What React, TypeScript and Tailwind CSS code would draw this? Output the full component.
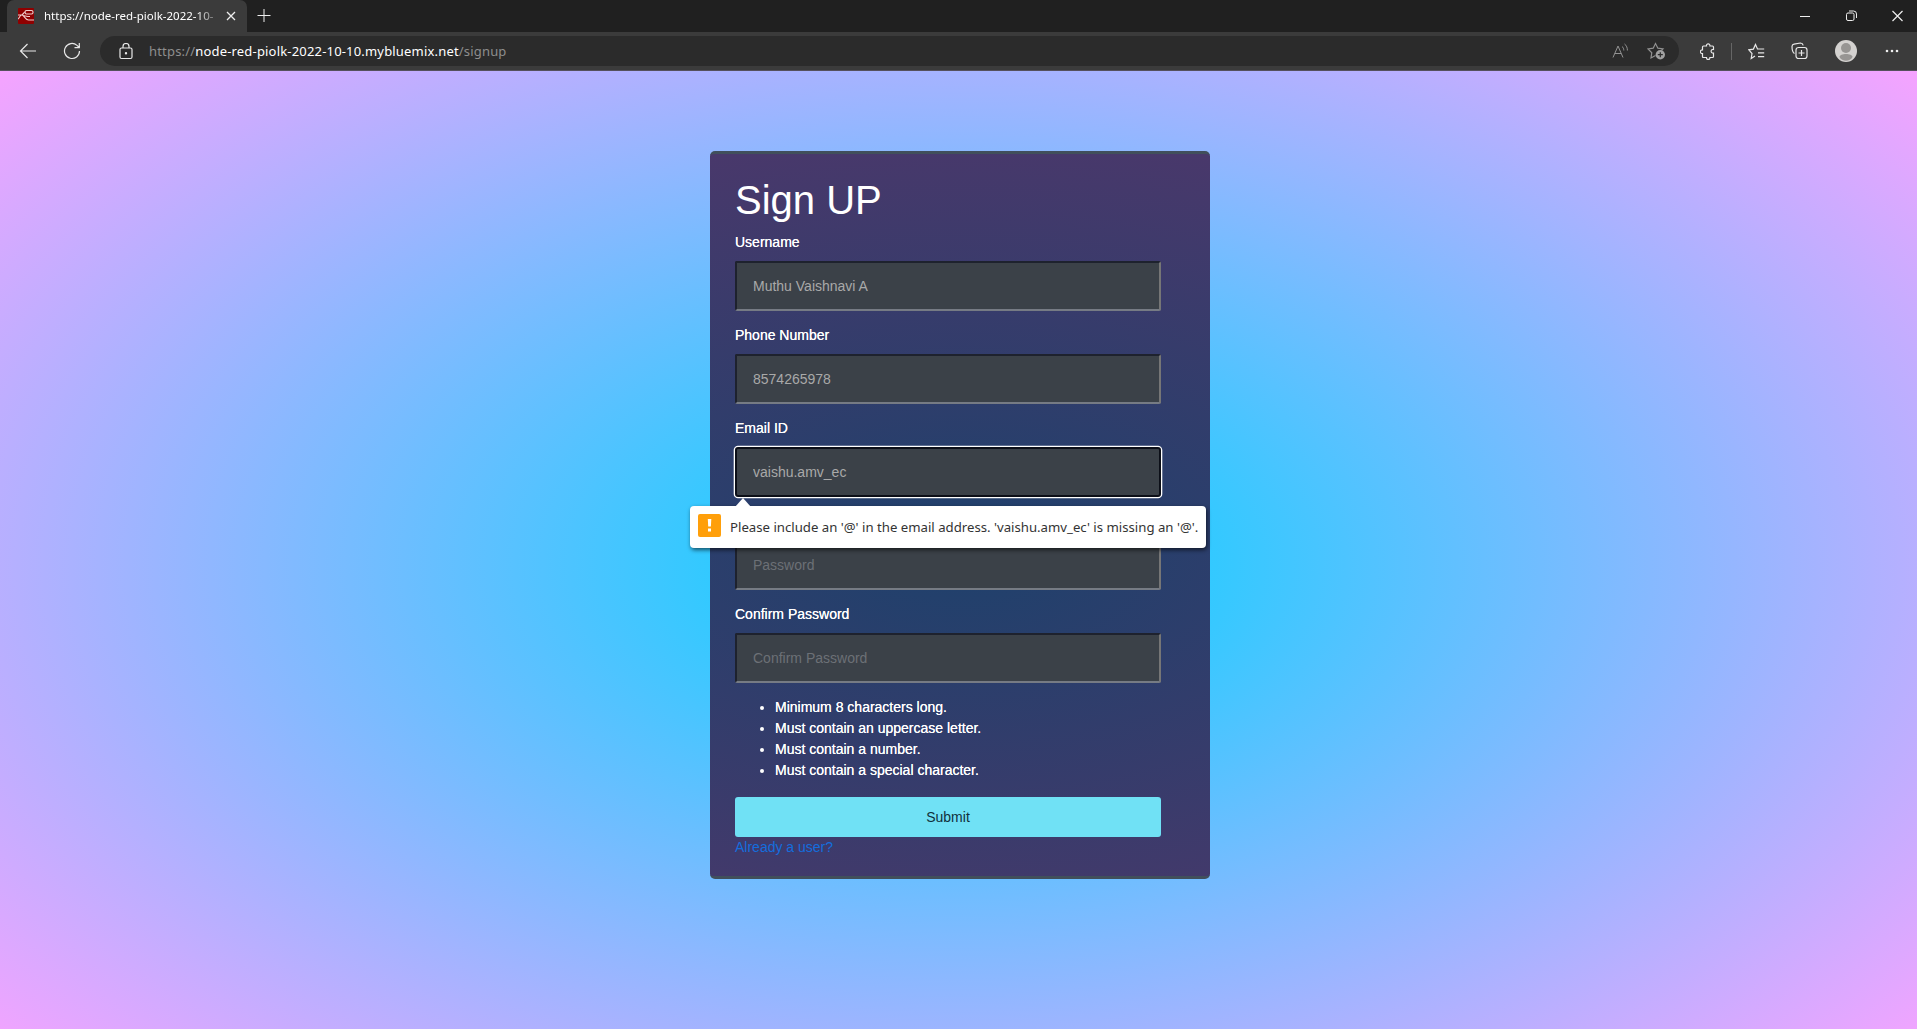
import React from "react";

const SEG = "font-['Noto_Sans','Open_Sans',sans-serif]";

function Field({ label, value, placeholder, focused }: { label: string; value?: string; placeholder?: string; focused?: boolean }) {
  return (
    <div className="h-[93px]">
      <label className="block h-[29px] leading-[21px] text-white [text-shadow:0_0_0.6px_#fff]">{label}</label>
      <input
        readOnly
        defaultValue={value}
        placeholder={placeholder}
        className={
          focused
            ? "block h-[50px] w-[426px] rounded-[3px] border-2 border-[#0c0f18] bg-[#3b4148] px-4 text-[#a9a9a9] shadow-[0_0_0_1.300px_#fff] outline-none"
            : "block h-[50px] w-[426px] rounded-[2px] border-2 border-t-[#1e222e] border-l-[#1e222e] border-r-[#767676] border-b-[#767b84] bg-[#3b4148] px-4 text-[#a9a9a9] outline-none placeholder:text-[#6c7076]"
        }
      />
    </div>
  );
}

export default function App() {
  return (
    <div className="flex h-[1029px] w-[1917px] flex-col overflow-hidden">
      <header className={`${SEG} shrink-0 bg-[#3b3b3b] text-white`}>
        <div className="flex h-8 items-start bg-[#202020]">
          <div className="ml-[7px] flex h-8 w-[240px] items-center rounded-t-[7px] bg-[#3b3b3b] pl-[11px]">
            <svg className="shrink-0" width="16" height="16" viewBox="0 0 16 16" fill="none" stroke="#f0cfcf" strokeWidth="1.100">
              <rect width="16" height="16" rx="1" fill="#8f0000" stroke="none" />
              <path d="M0 7h3.500c2 0 1.500-3 4-3M3.500 7c3 0 3.500 5 7 5H16M0 11c1 0 2-4 3.500-4M5 7.500c3 .5 4 1 7 1" />
              <rect x="7" y="2.500" width="8" height="3.500" rx="1.500" />
            </svg>
            <div className="ml-[10px] w-[172px] shrink-0 text-[11.5px] whitespace-nowrap [mask-image:linear-gradient(to_right,#000_88%,#0004)]">
              https://node-red-piolk-2022-10-
            </div>
            <svg className="ml-[10px] shrink-0" width="10" height="10" viewBox="0 0 10 10" stroke="#eee" strokeWidth="1.300"><path d="M1 1l8 8M9 1l-8 8" /></svg>
          </div>
          <svg className="mt-[9px] ml-[10px]" width="14" height="14" viewBox="0 0 14 14" stroke="#eee"><path d="M.5 6.500h13M7 0v13" /></svg>
          <div className="mt-[10px] mr-[14px] ml-auto flex h-3 items-center gap-[35px]">
            <svg width="11" height="12" viewBox="0 0 11 12" stroke="#eee"><path d="M0 6.500h10" /></svg>
            <svg width="11" height="12" viewBox="0 0 11 12" fill="none" stroke="#eee"><rect x=".5" y="3" width="7.500" height="7.500" rx="1.500" /><path d="M3 1h4.500a3 3 0 0 1 3 3v4" /></svg>
            <svg width="11" height="12" viewBox="0 0 11 12" stroke="#eee" strokeWidth="1.200"><path d="M.5 1l10 10M10.500 1l-10 10" /></svg>
          </div>
        </div>
        <div className="flex h-[39px] items-center border-b border-[#55505c]">
          <svg className="ml-[19px]" width="18" height="16" viewBox="0 0 18 16" fill="none" stroke="#e8e8e8" strokeWidth="1.200"><path d="M17 8H1.500M8.500 1l-7 7 7 7" /></svg>
          <svg className="ml-[26px]" width="18" height="18" viewBox="0 0 18 18" fill="none" stroke="#e8e8e8" strokeWidth="1.200"><path d="M16.500 9A7.500 7.500 0 1 1 14 3.400L16.300 5.500M16.300 1v4.700h-4.800" /></svg>
          <div className="ml-[19px] flex h-[30px] w-[1579px] items-center rounded-full bg-[#2b2b2b]">
            <svg className="ml-[19px]" width="14" height="17" viewBox="0 0 14 17" fill="none" stroke="#e8e8e8" strokeWidth="1.200"><rect x="1" y="5" width="12" height="10.500" rx="1.500" /><path d="M4 5V3.500a3 3 0 0 1 6 0V5" /><circle cx="7" cy="10.300" r=".6" fill="#fff" /></svg>
            <div className="mt-px ml-4 text-[13px] tracking-[0.18px] whitespace-nowrap text-[#8e8e8e]">https://<span className="text-white">node-red-piolk-2022-10-10.mybluemix.net</span>/signup</div>
            <svg className="ml-auto" width="17" height="16" viewBox="0 0 17 16" fill="none" stroke="#929292"><path d="M1 14.500L6 3l5 11.500M2.800 10.500h6.400M10 3.500c1.300 1 1.800 2.200 1.800 4M12.500 1c2.200 1.500 2.900 4 2.900 6.500" /></svg>
            <svg className="mr-[13px] ml-[18px]" width="19" height="18" viewBox="0 0 19 18" fill="none" stroke="#929292" strokeWidth="1.200"><path d="M8.500 13.500L4 16l.8-5.300L1 7l5.200-.8L8.500 1.500l2.400 4.700L16 7l-1.500 1.400" /><circle cx="13.300" cy="12.700" r="4.700" fill="#a0a0a0" stroke="none" /><path d="M13.300 10.200v5M10.800 12.700h5" stroke="#2b2b2b" /></svg>
          </div>
          <svg className="ml-[21px]" width="16" height="17" viewBox="0 0 16 17" fill="none" stroke="#e8e8e8" strokeWidth="1.200"><path d="M3.500 3h3c-.4-2.800 3.800-2.800 3.400 0H12.500q1 0 1 1v2.500c-3.200-.5-3.200 4 0 3.700V13.500q0 1-1 1H9.900c.4 2.600-3.800 2.600-3.400 0h-3q-1 0-1-1v-2.800c-2.800.2-2.800-4 0-3.800V4q0-1 1-1z" /></svg>
          <div className="ml-[15px] h-[17px] w-px bg-[#666]" />
          <svg className="ml-[16px]" width="17" height="17" viewBox="0 0 17 17" fill="none" stroke="#e8e8e8" strokeWidth="1.200"><path d="M7 13l-3.800 2.500.8-5L.8 6.800l4.600-.7L7.500 1.500l2 4.500h6.700M10 9.800h6.200M10 13.600h6.200" /></svg>
          <svg className="ml-[26px]" width="17" height="18" viewBox="0 0 17 18" fill="none" stroke="#e8e8e8" strokeWidth="1.200"><rect x="5" y="5.500" width="11" height="11" rx="2.500" /><path d="M10.500 8v6M7.500 11h6M3.500 11.500C1.500 10.500 1 7 1 4.500c0-1.500.8-2.200 2-2.400L9.500 1c1.500 0 2.300.7 2.700 2.300" /></svg>
          <svg className="ml-[27px]" width="22" height="22" viewBox="0 0 22 22"><circle cx="11" cy="11" r="11" fill="#d4d2d0" /><circle cx="11" cy="8" r="5" fill="#979593" /><path d="M4.500 17c0-4 13-4 13 0-2.500 5-10.500 5-13 0z" fill="#979593" /></svg>
          <svg className="ml-[28px]" width="14" height="4" viewBox="0 0 14 4" fill="#eee"><circle cx="2" cy="2" r="1.300" /><circle cx="7" cy="2" r="1.300" /><circle cx="12" cy="2" r="1.300" /></svg>
        </div>
      </header>
      <main className="flex flex-1 items-start bg-[radial-gradient(1330px_760px_at_50%_51.500%,#04d2ff_0%,#fda2ff_100%)] pt-[80px] font-['Liberation_Sans',Arial,sans-serif] text-[14px]">
        <section className="relative ml-[710px] h-[728px] w-[500px] rounded-[5px] border-y-[3px] border-[#414f5c] bg-[radial-gradient(800px_420px_at_50%_55%,#1e416c_0%,#49386b_100%)] px-[25px]">
          <h1 className="pt-[22px] text-[40px] leading-[48px] text-white">Sign UP</h1>
          <form className="pt-[8px]">
            <Field label="Username" value="Muthu Vaishnavi A" />
            <Field label="Phone Number" value="8574265978" />
            <Field label="Email ID" value="vaishu.amv_ec" focused />
            <div className="h-[93px] pt-[29px]">
              <input
                readOnly
                placeholder="Password"
                className="block h-[50px] w-[426px] rounded-[2px] border-2 border-t-[#1e222e] border-l-[#1e222e] border-r-[#767676] border-b-[#767b84] bg-[#3b4148] px-4 text-[#a9a9a9] outline-none placeholder:text-[#6c7076]"
              />
            </div>
            <Field label="Confirm Password" placeholder="Confirm Password" />
            <ul className="list-disc pl-10 leading-[21px] text-white [text-shadow:0_0_0.6px_#fff]">
              <li>Minimum 8 characters long.</li>
              <li>Must contain an uppercase letter.</li>
              <li>Must contain a number.</li>
              <li>Must contain a special character.</li>
            </ul>
            <button type="button" className="mt-4 block h-10 w-[426px] rounded-[3px] bg-[#70e1f5] text-[#11303c]">Submit</button>
            <a className="block leading-[21px] text-[#146ddd]">Already a user?</a>
          </form>
          <div className={`${SEG} absolute top-[352px] left-[-20px] flex h-[42px] w-[516px] items-center rounded-[4px] bg-white pl-2 text-[13.2px] text-[#333] shadow-[1px_2px_4px_rgba(0,0,0,0.6)]`}>
            <svg className="absolute -top-2 left-[45px]" width="16" height="9" viewBox="0 0 16 9"><path d="M0 9L8 0l8 9z" fill="#fff" /></svg>
            <svg className="mb-[3px] shrink-0" width="23" height="23" viewBox="0 0 23 23"><rect width="23" height="23" rx="2" fill="#ff9f0a" /><path d="M9.800 5h3.500l-.4 7.500h-2.700zM10 14.500h3V17.500h-3z" fill="#fff" /></svg>
            <span className="mt-[2px] ml-[9px] whitespace-nowrap">Please include an '@' in the email address. 'vaishu.amv_ec' is missing an '@'.</span>
          </div>
        </section>
      </main>
    </div>
  );
}
